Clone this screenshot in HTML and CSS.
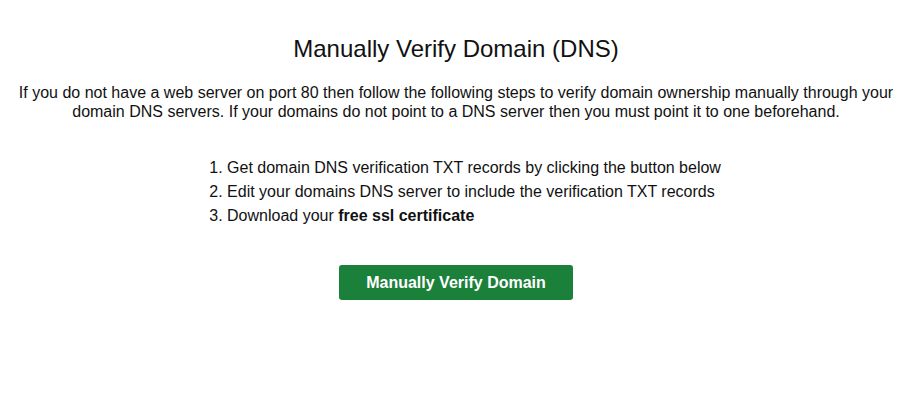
FILE: index.html
```html
<!DOCTYPE html>
<html>
<head>
<meta charset="utf-8">
<link rel="stylesheet" href="styles.css">
</head>
<body>
<div class="page">
  <h1 class="title">Manually Verify Domain (DNS)</h1>
  <p class="intro">If you do not have a web server on port 80 then follow the following steps to verify domain ownership manually through your domain DNS servers. If your domains do not point to a DNS server then you must point it to one beforehand.</p>
  <div class="steps-wrap">
    <ol class="steps">
      <li>Get domain DNS verification TXT records by clicking the button below</li>
      <li>Edit your domains DNS server to include the verification TXT records</li>
      <li>Download your <strong>free ssl certificate</strong></li>
    </ol>
  </div>
  <div class="actions">
    <button class="btn">Manually Verify Domain</button>
  </div>
</div>
</body>
</html>
```
FILE: styles.css
```css
html, body {
  margin: 0;
  padding: 0;
  background: #fff;
}
body {
  font-family: "Liberation Sans", Arial, sans-serif;
  color: #111;
}
.page {
  padding: 35px 8px 0;
  text-align: center;
}
.title {
  font-size: 24px;
  font-weight: normal;
  margin: 0 0 20px;
  line-height: 28px;
}
.intro {
  font-size: 16px;
  line-height: 19px;
  margin: 0;
}
.steps-wrap {
  display: flex;
  justify-content: center;
  margin-top: 35px;
}
.steps {
  text-align: left;
  font-size: 16px;
  line-height: 24px;
  margin: 0;
  padding-left: 36px;
}
.actions {
  margin-top: 37px;
  display: flex;
  justify-content: center;
}
.btn {
  font-family: "Liberation Sans", Arial, sans-serif;
  font-size: 16px;
  font-weight: bold;
  color: #fff;
  background: #1b803a;
  border: none;
  border-radius: 3px;
  width: 234px;
  height: 35px;
  padding: 0;
}
```
